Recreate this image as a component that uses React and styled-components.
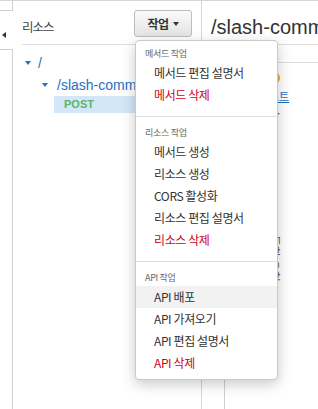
import React from 'react';
import styled, { createGlobalStyle } from 'styled-components';

const GlobalStyle = createGlobalStyle`
  * { box-sizing: border-box; }
  html, body {
    margin: 0;
    padding: 0;
    width: 318px;
    height: 409px;
    overflow: hidden;
    background: #fff;
    font-family: "Liberation Sans", "Noto Sans CJK KR", sans-serif;
  }
`;

const Page = styled.div`
  display: flex;
  width: 318px;
  height: 409px;
  border-top: 1px solid #d6d6d6;
`;

const Sidebar = styled.div`
  display: flex;
  flex-direction: column;
  width: 13px;
  flex-shrink: 0;
`;

const SideCap = styled.div`
  height: 10px;
  border-right: 1px solid #cfcfcf;
  border-bottom: 1px solid #cfcfcf;
`;

const SideToggle = styled.div`
  height: 38px;
  padding: 21px 0 0 2px;
`;

const LeftArrow = styled.span`
  display: block;
  width: 0;
  height: 0;
  border-top: 3px solid transparent;
  border-bottom: 3px solid transparent;
  border-right: 4px solid #333;
`;

const SideRest = styled.div`
  flex: 1;
  border-right: 1px solid #cfcfcf;
  border-top: 1px solid #cfcfcf;
`;

const ResourcePanel = styled.div`
  width: 189px;
  flex-shrink: 0;
  padding: 0 9px;
  border-right: 1px solid #d6d6d6;
`;

const PanelHeader = styled.div`
  display: flex;
  justify-content: space-between;
  align-items: flex-start;
  height: 44px;
  padding-top: 9px;
  border-bottom: 1px solid #ddd;
`;

const PanelTitle = styled.h2`
  margin: 7px 0 0;
  font-family: "Noto Sans CJK KR", sans-serif;
  font-size: 12.5px;
  font-weight: 400;
  line-height: 20px;
  letter-spacing: -1px;
  color: #444;
`;

const ActionWrap = styled.div`
  position: relative;
`;

const ActionButton = styled.button`
  display: flex;
  align-items: center;
  justify-content: center;
  gap: 4px;
  width: 58px;
  height: 27px;
  padding: 0;
  border: 1px solid #bdbdbd;
  border-radius: 3px;
  background: linear-gradient(#fafafa, #e4e4e4);
  font-family: "Noto Sans CJK KR", sans-serif;
  font-size: 12px;
  font-weight: 700;
  letter-spacing: -0.5px;
  color: #333;
`;

const Caret = styled.span`
  flex-shrink: 0;
  width: 0;
  height: 0;
  border-left: 3px solid transparent;
  border-right: 3px solid transparent;
  border-top: 4px solid ${(p) => p.color || '#333'};
`;

const Menu = styled.div`
  position: absolute;
  top: calc(100% + 3px);
  left: 1px;
  z-index: 10;
  width: 143px;
  background: #fff;
  border: 1px solid #c9c9c9;
  border-radius: 4px;
  box-shadow: 0 4px 14px rgba(0, 0, 0, 0.22);
  font-family: "Noto Sans CJK KR", sans-serif;
`;

const MenuSection = styled.div`
  padding: 9px 0 10px;
  border-top: 1px solid #dedede;

  &:first-child {
    padding-top: 6px;
    border-top: none;
  }

  &:last-child {
    padding-bottom: 5px;
  }
`;

const MenuHeader = styled.div`
  height: 14px;
  margin-bottom: 1px;
  padding-left: 9px;
  font-size: 9px;
  line-height: 14px;
  letter-spacing: -0.3px;
  color: #666;
`;

const MenuItem = styled.div`
  height: 22px;
  padding-left: 18px;
  font-size: 12px;
  line-height: 22px;
  letter-spacing: -0.4px;
  white-space: nowrap;
  color: ${(p) => (p.danger ? '#d0021b' : '#333')};
  background: ${(p) => (p.active ? '#f2f2f2' : 'transparent')};
`;

const Tree = styled.div`
  padding-top: 7px;
`;

const TreeRow = styled.div`
  display: flex;
  align-items: center;
  height: 22px;
  padding-left: ${(p) => p.indent}px;
  font-size: 14px;
  color: #2a6fbe;
  white-space: nowrap;
`;

const TreeLabel = styled.span`
  margin-left: ${(p) => p.gap}px;
`;

const MethodRow = styled.div`
  height: 17px;
  margin-left: 32px;
  padding-left: 10px;
  background: #d4e7f9;
  font-size: 11px;
  font-weight: 700;
  line-height: 17px;
  color: #5cb563;
`;

const DetailPanel = styled.div`
  flex: 1;
  min-width: 0;
  display: flex;
  flex-direction: column;
  overflow: hidden;
`;

const DetailTitle = styled.h1`
  height: 44px;
  margin: 0;
  padding: 14px 0 0 9px;
  border-bottom: 1px solid #ddd;
  font-size: 20px;
  font-weight: 400;
  line-height: 24px;
  color: #333;
  white-space: nowrap;
`;

const SubBar = styled.div`
  height: 18px;
  border-bottom: 1px solid #ddd;
`;

const Diagram = styled.div`
  flex: 1;
  margin-left: 22px;
  padding-left: 29px;
  border-left: 1px solid #d0d0d0;
`;

const Stage = styled.div`
  display: flex;
  flex-direction: column;
  align-items: center;
  width: 40px;
  padding-top: 9px;
`;

const Dot = styled.span`
  width: 12px;
  height: 12px;
  border-radius: 50%;
  background: #f0a541;
`;

const StageLink = styled.a`
  margin-top: 5px;
  font-family: "Noto Sans CJK KR", sans-serif;
  font-size: 11px;
  line-height: 14px;
  color: #1f6fbf;
  text-decoration: underline;
  white-space: nowrap;
`;

const DownArrow = styled.span`
  margin-top: 10px;
  width: 0;
  height: 0;
  border-left: 6px solid transparent;
  border-right: 6px solid transparent;
  border-top: 6px solid #1f6fbf;
`;

const SideLabel = styled.span`
  margin-top: 116px;
  writing-mode: vertical-rl;
  text-orientation: sideways;
  font-family: "Noto Sans CJK KR", sans-serif;
  font-size: 12px;
  color: #555;
  white-space: nowrap;
`;

const menuGroups = [
  {
    title: '메서드 작업',
    items: [{ label: '메서드 편집 설명서' }, { label: '메서드 삭제', danger: true }],
  },
  {
    title: '리소스 작업',
    items: [
      { label: '메서드 생성' },
      { label: '리소스 생성' },
      { label: 'CORS 활성화' },
      { label: '리소스 편집 설명서' },
      { label: '리소스 삭제', danger: true },
    ],
  },
  {
    title: 'API 작업',
    items: [
      { label: 'API 배포', active: true },
      { label: 'API 가져오기' },
      { label: 'API 편집 설명서' },
      { label: 'API 삭제', danger: true },
    ],
  },
];

export default function App() {
  return (
    <>
      <GlobalStyle />
      <Page>
        <Sidebar>
          <SideCap />
          <SideToggle>
            <LeftArrow />
          </SideToggle>
          <SideRest />
        </Sidebar>

        <ResourcePanel>
          <PanelHeader>
            <PanelTitle>리소스</PanelTitle>
            <ActionWrap>
              <ActionButton>
                작업
                <Caret />
              </ActionButton>
              <Menu>
                {menuGroups.map((group) => (
                  <MenuSection key={group.title}>
                    <MenuHeader>{group.title}</MenuHeader>
                    {group.items.map((item) => (
                      <MenuItem key={item.label} danger={item.danger} active={item.active}>
                        {item.label}
                      </MenuItem>
                    ))}
                  </MenuSection>
                ))}
              </Menu>
            </ActionWrap>
          </PanelHeader>
          <Tree>
            <TreeRow indent={3}>
              <Caret color="#2a6fbe" />
              <TreeLabel gap={7}>/</TreeLabel>
            </TreeRow>
            <TreeRow indent={20}>
              <Caret color="#2a6fbe" />
              <TreeLabel gap={9}>/slash-command</TreeLabel>
            </TreeRow>
            <MethodRow>POST</MethodRow>
          </Tree>
        </ResourcePanel>

        <DetailPanel>
          <DetailTitle>/slash-command</DetailTitle>
          <SubBar />
          <Diagram>
            <Stage>
              <Dot />
              <StageLink>테스트</StageLink>
              <DownArrow />
              <SideLabel>통합 요청</SideLabel>
            </Stage>
          </Diagram>
        </DetailPanel>
      </Page>
    </>
  );
}
